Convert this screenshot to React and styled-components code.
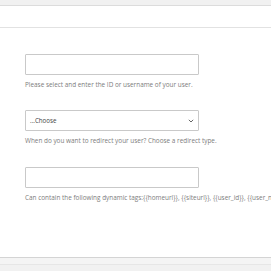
import React from 'react'
import styled, { createGlobalStyle } from 'styled-components'

const Global = createGlobalStyle`
  html, body {
    margin: 0;
    padding: 0;
    background: #fff;
    overflow: hidden;
  }
  body {
    font-family: "Open Sans", "Liberation Sans", sans-serif;
  }
`

const Page = styled.div`
  width: 271px;
  height: 271px;
  display: flex;
  flex-direction: column;
  overflow: hidden;
`

const TopBar = styled.div`
  height: 5px;
  background: #f1f1f1;
  border-bottom: 1px solid #dcdcdc;
`

const Header = styled.div`
  height: 21px;
  background: #fff;
  border-bottom: 1px solid #e2e2e2;
`

const Body = styled.div`
  flex: 1;
  padding: 26px 0 0 25px;
  display: flex;
  flex-direction: column;
`

const Field = styled.div`
  display: flex;
  flex-direction: column;
  margin-bottom: ${p => p.$gap || 0}px;
`

const Input = styled.div`
  width: 174px;
  height: 21px;
  box-sizing: border-box;
  border: 1px solid #c9c9c9;
  border-radius: 1px;
  background: #fff;
  display: flex;
  align-items: center;
  justify-content: space-between;
  padding: 0 4px 0 4px;
`

const SelectText = styled.span`
  font-size: 6.2px;
  color: #444;
`

const Help = styled.div`
  margin-top: 6px;
  font-size: 6.4px;
  line-height: 8px;
  color: #7c7c7c;
  white-space: nowrap;
`

const Footer = styled.div`
  height: 6px;
  background: #f4f4f4;
  border-top: 1px solid #d4d4d4;
  border-bottom: 1px solid #e6e6e6;
`

const FooterFill = styled.div`
  height: 6px;
  background: #f1f1f1;
`

function Chevron () {
  return (
    <svg width="6" height="4" viewBox="0 0 6 4">
      <path d="M0.8 0.8 L3 3 L5.2 0.8" fill="none" stroke="#555" strokeWidth="0.9" />
    </svg>
  )
}

export default function App () {
  return (
    <Page>
      <Global />
      <TopBar />
      <Header />
      <Body>
        <Field $gap={21}>
          <Input />
          <Help>Please select and enter the ID or username of your user.</Help>
        </Field>
        <Field $gap={22}>
          <Input>
            <SelectText>...Choose</SelectText>
            <Chevron />
          </Input>
          <Help>When do you want to redirect your user? Choose a redirect type.</Help>
        </Field>
        <Field>
          <Input />
          <Help>Can contain the following dynamic tags:{'{{homeurl}}'}, {'{{siteurl}}'}, {'{{user_id}}'}, {'{{user_name}}'}</Help>
        </Field>
      </Body>
      <Footer />
      <FooterFill />
    </Page>
  )
}
